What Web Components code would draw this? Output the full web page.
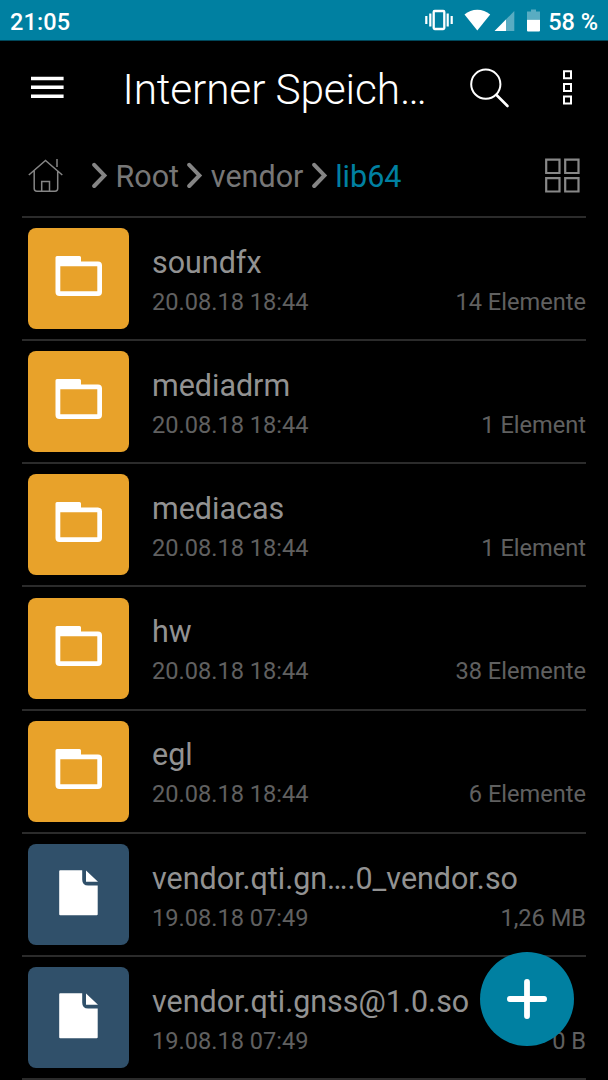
<!DOCTYPE html>
<html lang="de">

<head>
    <meta charset="UTF-8">
    <title>Interner Speicher</title>
    <style>
        html, body {
            margin: 0;
            height: 100%;
            background: #000;
            overflow: hidden;
            font-family: Roboto, sans-serif;
        }
    </style>
</head>

<body>

<script>
// small base class: every element only supplies its own template
class BaseElement extends HTMLElement {
  constructor() {
    super();
    this.attachShadow({ mode: "open" });
  }

  connectedCallback() {
    this.shadowRoot.innerHTML = this.template();
  }
}

class StatusBar extends BaseElement {
  template() {
    return `
      <style>
        :host {
          display: flex;
          align-items: center;
          box-sizing: border-box;
          height: 41px;
          padding: 0 10px 0 10px;
          background: #0080a1;
          border-bottom: 1px solid #00475a;
          color: #fff;
          font-size: 23.5px;
          font-weight: 500;
        }
        span { line-height: 40px; padding-top: 3px; white-space: nowrap; }
        .time { flex: 1; letter-spacing: .1px; }
        svg { display: block; flex: none; }
        .level { margin-left: 7px; }
      </style>
      <span class="time"><slot></slot></span>
      <svg width="116" height="40" viewBox="425 0 116 40" fill="#fff">
        <rect x="433.7" y="11" width="10.6" height="18" rx="1" fill="none" stroke="#fff" stroke-width="2.3"/>
        <path d="M425.2 16h2.2v8h-2.2zM429.2 13.5h2.2v13h-2.2zM446.6 13.5h2.2v13h-2.2zM450.6 16h2.2v8h-2.2z"/>
        <path d="M464.5 14.6Q470 9.8 477.3 9.8T490.2 14.6L477.3 30.4z"/>
        <path d="M514.3 11v20H494.6z" opacity=".35"/>
        <path d="M506 19.5V31h-11.4z"/>
        <path d="M531 9.5h5v2h4v8.3h-13v-8.3h4z" opacity=".35"/>
        <path d="M527 19.8h13V30.5q0 1-1 1h-11q-1 0-1-1z"/>
      </svg>
      <span class="level"><slot name="level"></slot></span>
    `;
  }
}

class ToolBar extends BaseElement {
  template() {
    return `
      <style>
        :host {
          display: flex;
          align-items: center;
          box-sizing: border-box;
          height: 93px;
          padding: 0 36px 0 31px;
          color: #fff;
        }
        svg { display: block; flex: none; }
        h1 {
          flex: 1;
          margin: 0 0 0 58.5px;
          padding-top: 4.5px;
          font-size: 42.4px;
          line-height: 56px;
          font-weight: 300;
          letter-spacing: -.15px;
          white-space: nowrap;
        }
        .more { margin-left: 53px; }
      </style>
      <svg width="33" height="23" viewBox="0 0 33 23" fill="#fff">
        <path d="M0 .8h32.6v3.4H0zM0 9.6h32.6v3.4H0zM0 18.6h32.6v3.4H0z"/>
      </svg>
      <h1><slot></slot></h1>
      <svg width="40" height="40" viewBox="470 67.5 40 40" fill="none" stroke="#fff" stroke-linecap="round">
        <circle cx="485.8" cy="83.7" r="14.6" stroke-width="2"/>
        <path d="M496.5 94.5l11 11" stroke-width="2.6"/>
      </svg>
      <svg class="more" width="9" height="35" viewBox="0 0 9 35" fill="none" stroke="#fff" stroke-width="2">
        <path d="M1 1.2h7v7H1zM1 14h7v7H1zM1 26.6h7v7H1z"/>
      </svg>
    `;
  }
}

class PathBar extends BaseElement {
  template() {
    return `
      <style>
        :host {
          display: flex;
          align-items: center;
          box-sizing: border-box;
          height: 82px;
          padding: 0 6px;
          margin: 0 22px;
        }
        nav { display: flex; flex: 1; margin-left: 29px; }
        svg { display: block; flex: none; }
      </style>
      <svg width="35" height="36" viewBox="28 157 35 36" fill="none" stroke="#858585" stroke-width="1.5">
        <path d="M28.8 175L45.5 160.4 62.3 175M34.2 170.5V188.5q0 2.7 2.7 2.7H55q2.7 0 2.7-2.7V170.5"/>
        <path d="M41.7 191V181.5h7.8V191M57 159v8"/>
      </svg>
      <nav><slot></slot></nav>
      <svg width="35" height="35" viewBox="0 0 35 35" fill="none" stroke="#888" stroke-width="2.2">
        <path d="M1.2 1.7h13.3v13.3H1.2zM20.2 1.7h13.3v13.3H20.2zM1.2 20.2h13.3v13.3H1.2zM20.2 20.2h13.3v13.3H20.2z"/>
      </svg>
    `;
  }
}

class PathCrumb extends BaseElement {
  template() {
    return `
      <style>
        :host {
          display: flex;
          align-items: center;
          margin-right: 8.3px;
          color: #777;
          font-size: 30.5px;
          line-height: 36px;
        }
        :host([current]) { color: #0080a1; }
        svg { display: block; margin-right: 7.5px; }
        span { padding-top: 4px; }
      </style>
      <svg width="16" height="27" viewBox="0 0 16 27" fill="none" stroke="#858585" stroke-width="4" stroke-linecap="round">
        <path d="M2.2 2.8L12.4 13.4 2.2 24"/>
      </svg>
      <span><slot></slot></span>
    `;
  }
}

class FileList extends BaseElement {
  template() {
    return `
      <style>
        :host { display: block; margin: 0 22px; border-top: 2px solid #2b2b2b; }
      </style>
      <slot></slot>
    `;
  }
}

const ICONS = {
  folder: `<path fill-rule="evenodd" d="M29 28h22.5q1.5 0 1.5 1.5V33.5h17q4 0 4 4V64q0 4-4 4H31.5q-4 0-4-4V29.5q0-1.5 1.5-1.5zM32.3 38.3V63.2H69.3V38.3z"/>`,
  file: `<path d="M32 26.2H54.2V35.5q0 6 6 6H69.7V70.3q0 1-1 1H32.2q-1 0-1-1V27.2q0-1 1-1z"/>
         <path d="M58 26.5L70 37.8H58z"/>`
};

class FileRow extends BaseElement {
  template() {
    const type = this.getAttribute("type");
    return `
      <style>
        :host {
          display: flex;
          box-sizing: border-box;
          height: 123.17px;
          padding: 10.1px 0 0 6px;
          border-bottom: 2px solid #2b2b2b;
        }
        .tile {
          flex: none;
          width: 101px;
          height: 101px;
          border-radius: 8px;
          background: #30506a;
        }
        .tile.folder { background: #e8a22a; }
        svg { display: block; }
        .text { flex: 1; margin-left: 23px; padding-top: 15.7px; }
        .name { color: #929292; font-size: 30.45px; line-height: 38px; white-space: nowrap; }
        .info {
          display: flex;
          justify-content: space-between;
          margin-top: 5px;
          color: #606060;
          font-size: 23.6px;
          line-height: 30px;
        }
      </style>
      <div class="tile ${type}">
        <svg width="101" height="101" viewBox="0 0 101 101" fill="#fff">${ICONS[type]}</svg>
      </div>
      <div class="text">
        <div class="name"><slot></slot></div>
        <div class="info">
          <span>${this.getAttribute("date")}</span>
          <span>${this.getAttribute("size")}</span>
        </div>
      </div>
    `;
  }
}

class AddButton extends BaseElement {
  template() {
    return `
      <style>
        :host {
          position: fixed;
          right: 34px;
          bottom: 34px;
          width: 94.4px;
          height: 94.4px;
          border-radius: 50%;
          background: #0080a1;
          display: flex;
          align-items: center;
          justify-content: center;
        }
      </style>
      <svg width="40" height="40" viewBox="0 0 40 40" stroke="#fff" stroke-width="5.8" stroke-linecap="round">
        <path d="M2.9 20h34.2M20 2.9v34.2"/>
      </svg>
    `;
  }
}

customElements.define("status-bar", StatusBar);
customElements.define("tool-bar", ToolBar);
customElements.define("path-bar", PathBar);
customElements.define("path-crumb", PathCrumb);
customElements.define("file-list", FileList);
customElements.define("file-row", FileRow);
customElements.define("add-button", AddButton);
</script>

<status-bar>21:05<span slot="level">58 %</span></status-bar>
<tool-bar>Interner Speich…</tool-bar>
<path-bar>
    <path-crumb>Root</path-crumb>
    <path-crumb>vendor</path-crumb>
    <path-crumb current>lib64</path-crumb>
</path-bar>
<file-list>
    <file-row type="folder" date="20.08.18 18:44" size="14 Elemente">soundfx</file-row>
    <file-row type="folder" date="20.08.18 18:44" size="1 Element">mediadrm</file-row>
    <file-row type="folder" date="20.08.18 18:44" size="1 Element">mediacas</file-row>
    <file-row type="folder" date="20.08.18 18:44" size="38 Elemente">hw</file-row>
    <file-row type="folder" date="20.08.18 18:44" size="6 Elemente">egl</file-row>
    <file-row type="file" date="19.08.18 07:49" size="1,26 MB">vendor.qti.gn….0_vendor.so</file-row>
    <file-row type="file" date="19.08.18 07:49" size="0 B">vendor.qti.gnss@1.0.so</file-row>
</file-list>
<add-button></add-button>

</body>

</html>
